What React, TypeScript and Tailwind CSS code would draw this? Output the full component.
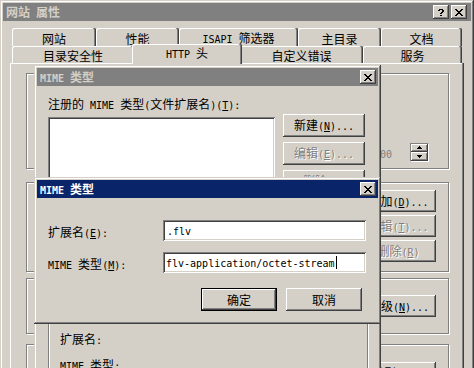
import React from 'react';

const CJK = /[\u2e80-\u9fff\uf900-\ufaff\uff00-\uffef]/;

type Run = { t: string; c: boolean; u: boolean };

function T({ s }: { s: string }) {
  const runs: Run[] = [];
  let under = false;
  for (const ch of s) {
    if (ch === '&') {
      under = true;
      continue;
    }
    const c = CJK.test(ch);
    const u = under;
    under = false;
    const last = runs[runs.length - 1];
    if (last && last.c === c && !last.u && !u) last.t += ch;
    else runs.push({ t: ch, c, u });
  }
  return (
    <span className="whitespace-pre leading-[12px]">
      {runs.map((r, i) =>
        r.c ? (
          <span key={i} className={`font-['Noto_Sans_CJK_SC',sans-serif] text-[12px] leading-[12px] ${r.u ? 'underline' : ''}`}>
            {r.t}
          </span>
        ) : (
          <span key={i} className={`font-['DejaVu_Sans_Mono',monospace] text-[10px] leading-[12px] ${r.u ? 'underline underline-offset-[1px]' : ''}`}>
            {r.t}
          </span>
        )
      )}
    </span>
  );
}

const raised =
  'shadow-[inset_-1px_-1px_#404040,inset_1px_1px_#fff,inset_-2px_-2px_#808080,inset_2px_2px_#d4d0c8]';
const raisedDef = 'shadow-[inset_-1px_-1px_#404040,inset_1px_1px_#fff,inset_-2px_-2px_#808080]';
const frame =
  'shadow-[inset_-1px_-1px_#404040,inset_1px_1px_#d4d0c8,inset_-2px_-2px_#808080,inset_2px_2px_#fff]';
const sunken =
  'shadow-[inset_1px_1px_#808080,inset_-1px_-1px_#fff,inset_2px_2px_#404040,inset_-2px_-2px_#d4d0c8]';
const etched = 'shrink-0 border border-[#808080] shadow-[1px_1px_0_#fff,inset_1px_1px_0_#fff]';
const disabledText = 'text-[#808080] [text-shadow:1px_1px_0_#fff]';

function Btn({
  s,
  className = '',
  def = false,
  disabled = false,
}: {
  s: string;
  className?: string;
  def?: boolean;
  disabled?: boolean;
}) {
  return (
    <div
      className={`flex shrink-0 items-center justify-center bg-[#d4d0c8] ${
        def ? `border border-black ${raisedDef}` : raised
      } ${disabled ? disabledText : 'text-black'} ${className}`}
    >
      <T s={s} />
    </div>
  );
}

function CloseGlyph() {
  const rects: [number, number, number][] = [
    [0, 0, 2], [6, 0, 2],
    [1, 1, 2], [5, 1, 2],
    [2, 2, 4],
    [3, 3, 2],
    [2, 4, 4],
    [1, 5, 2], [5, 5, 2],
    [0, 6, 2], [6, 6, 2],
  ];
  return (
    <svg width="8" height="7" viewBox="0 0 8 7" shapeRendering="crispEdges">
      {rects.map(([x, y, w], i) => (
        <rect key={i} x={x} y={y} width={w} height={1} fill="#000" />
      ))}
    </svg>
  );
}

function HelpGlyph() {
  const rects: [number, number, number][] = [
    [1, 0, 4],
    [0, 1, 2], [4, 1, 2],
    [4, 2, 2],
    [3, 3, 2],
    [2, 4, 2],
    [2, 6, 2],
  ];
  return (
    <svg width="6" height="7" viewBox="0 0 6 7" shapeRendering="crispEdges">
      {rects.map(([x, y, w], i) => (
        <rect key={i} x={x} y={y} width={w} height={1} fill="#000" />
      ))}
    </svg>
  );
}

function CapBtn({ children, className = '' }: { children: React.ReactNode; className?: string }) {
  return (
    <div className={`flex h-[14px] w-[16px] items-center justify-center bg-[#d4d0c8] ${raised} ${className}`}>
      {children}
    </div>
  );
}

function TitleBar({
  title,
  active,
  help = false,
  className = 'pr-[2px]',
}: {
  title: string;
  active: boolean;
  help?: boolean;
  className?: string;
}) {
  return (
    <div
      className={`flex h-[18px] shrink-0 items-center justify-between pl-[3px] font-bold ${className} ${
        active ? 'bg-[#0a246a] text-white' : 'bg-[#808080] text-[#d4d0c8]'
      }`}
    >
      <T s={title} />
      <div className="flex">
        {help && (
          <CapBtn>
            <HelpGlyph />
          </CapBtn>
        )}
        <CapBtn className={help ? 'ml-[2px]' : ''}>
          <CloseGlyph />
        </CapBtn>
      </div>
    </div>
  );
}

const tabShadow = 'shadow-[inset_-1px_0_#404040,inset_-2px_0_#808080,inset_1px_1px_#fff]';

function Tab({ s, w, selected = false }: { s: string; w: string; selected?: boolean }) {
  return (
    <div
      className={`flex shrink-0 justify-center rounded-t-[2px] bg-[#d4d0c8] text-black ${tabShadow} ${w} ${
        selected ? 'relative z-10 -mx-[2px] -mt-[2px] h-[20px] items-center pb-[1px]' : 'h-full items-center pt-[2px]'
      }`}
    >
      <T s={s} />
    </div>
  );
}

function Arrow({ up }: { up: boolean }) {
  return (
    <svg width="5" height="3" viewBox="0 0 5 3" shapeRendering="crispEdges">
      {up ? (
        <>
          <rect x="2" y="0" width="1" height="1" fill="#000" />
          <rect x="1" y="1" width="3" height="1" fill="#000" />
          <rect x="0" y="2" width="5" height="1" fill="#000" />
        </>
      ) : (
        <>
          <rect x="0" y="0" width="5" height="1" fill="#000" />
          <rect x="1" y="1" width="3" height="1" fill="#000" />
          <rect x="2" y="2" width="1" height="1" fill="#000" />
        </>
      )}
    </svg>
  );
}

function Page() {
  return (
    <div className="relative flex h-[420px] flex-col bg-[#d4d0c8] pl-[16px] pr-[15px] pt-[10px] shadow-[inset_-1px_-1px_#404040,inset_-2px_-2px_#808080,inset_1px_1px_#fff]">
      <div className={`h-[96px] ${etched} flex items-center justify-end gap-[18px] pr-[19px] pt-[62px]`}>
        <span className="text-[#808080]">
          <T s="00" />
        </span>
        <div className="flex h-[19px] w-[19px] flex-col border border-[#808080] border-b-white border-r-white">
          <div className={`flex flex-1 items-center justify-center ${raised}`}>
            <Arrow up />
          </div>
          <div className={`flex flex-1 items-center justify-center ${raised}`}>
            <Arrow up={false} />
          </div>
        </div>
      </div>
      <div className={`mt-[13px] h-[90px] ${etched} flex flex-col items-end gap-[3px] pr-[12px] pt-[7px]`}>
        <Btn s="添加(&D)..." className="h-[22px] w-[75px]" />
        <Btn s="编辑(&T)..." className="h-[22px] w-[75px]" disabled />
        <Btn s="删除(&R)" className="h-[22px] w-[75px]" disabled />
      </div>
      <div className={`mt-[6px] h-[56px] ${etched} flex flex-col items-end pr-[12px] pt-[16px]`}>
        <Btn s="编辑分级(&N)..." className="h-[22px] w-[98px]" />
      </div>
      <div className={`mt-[10px] h-[60px] ${etched} flex flex-col items-end pr-[12px] pt-[17px]`}>
        <Btn s="MIME 类型(&M)..." className="h-[22px] w-[98px]" />
      </div>
    </div>
  );
}

function OuterWindow() {
  return (
    <div className={`absolute left-0 top-0 h-[520px] w-[474px] bg-[#d4d0c8] p-[3px] ${frame}`}>
      <TitleBar title="网站 属性" active={false} help className="pr-[4px]" />
      <div className="mt-[7px] px-[7px]">
        <div className="ml-[2px] flex h-[18px]">
          <Tab s="网站" w="w-[84px]" />
          <Tab s="性能" w="w-[83px]" />
          <Tab s="ISAPI 筛选器" w="w-[119px]" />
          <Tab s="主目录" w="w-[83px]" />
          <Tab s="文档" w="w-[81px]" />
        </div>
        <div className="ml-[2px] flex h-[17px] items-start">
          <Tab s="目录安全性" w="w-[122px]" />
          <Tab s="HTTP 头" w="w-[110px]" selected />
          <Tab s="自定义错误" w="w-[123px]" />
          <Tab s="服务" w="w-[99px]" />
        </div>
        <Page />
      </div>
    </div>
  );
}

function MiddleDialog() {
  return (
    <div className={`absolute left-[34px] top-[65px] flex h-[360px] w-[347px] flex-col bg-[#d4d0c8] p-[3px] ${frame}`}>
      <TitleBar title="MIME 类型" active={false} />
      <div className="flex flex-col pl-[11px] text-black">
        <div className="mt-[12px] flex h-[12px] shrink-0 items-center">
          <T s="注册的 MIME 类型(文件扩展名)(&T):" />
        </div>
        <div className="mt-[4px] flex shrink-0 items-start">
          <div className={`mt-[3px] h-[140px] w-[227px] shrink-0 bg-white ${sunken}`} />
          <div className="ml-[8px] flex flex-col gap-[5px]">
            <Btn s="新建(&N)..." className="h-[23px] w-[82px]" />
            <Btn s="编辑(&E)..." className="h-[23px] w-[82px]" disabled />
            <Btn s="删除(&D)" className="h-[23px] w-[82px]" disabled />
          </div>
        </div>
        <div className={`mt-[33px] h-[100px] w-[320px] ${etched} flex flex-col gap-[14px] pl-[11px] pt-[42px]`}>
          <div className="flex h-[12px] items-center">
            <T s="扩展名:" />
          </div>
          <div className="flex h-[12px] items-center">
            <T s="MIME 类型:" />
          </div>
        </div>
      </div>
    </div>
  );
}

function FrontDialog() {
  return (
    <div className={`absolute left-[34px] top-[177px] h-[147px] w-[347px] bg-[#d4d0c8] p-[3px] ${frame}`}>
      <TitleBar title="MIME 类型" active />
      <div className="flex flex-col pl-[11px] pr-[12px] text-black">
        <div className="mt-[22px] flex h-[21px] items-center">
          <div className="w-[115px]">
            <T s="扩展名(&E):" />
          </div>
          <div className={`flex h-[21px] w-[203px] items-center bg-white pl-[4px] ${sunken}`}>
            <T s=".flv" />
          </div>
        </div>
        <div className="mt-[11px] flex h-[21px] items-center">
          <div className="w-[115px]">
            <T s="MIME 类型(&M):" />
          </div>
          <div className={`flex h-[21px] w-[203px] items-center bg-white pl-[3px] ${sunken}`}>
            <T s="flv-application/octet-stream" />
            <span className="ml-[1px] inline-block h-[13px] w-[1px] bg-black" />
          </div>
        </div>
        <div className="mt-[15px] flex justify-end gap-[9px] pr-[4px]">
          <Btn s="确定" className="h-[23px] w-[76px]" def />
          <Btn s="取消" className="h-[23px] w-[76px]" />
        </div>
      </div>
    </div>
  );
}

export default function App() {
  return (
    <div className="relative h-[368px] w-[474px] overflow-hidden bg-[#d4d0c8]">
      <OuterWindow />
      <MiddleDialog />
      <FrontDialog />
    </div>
  );
}
